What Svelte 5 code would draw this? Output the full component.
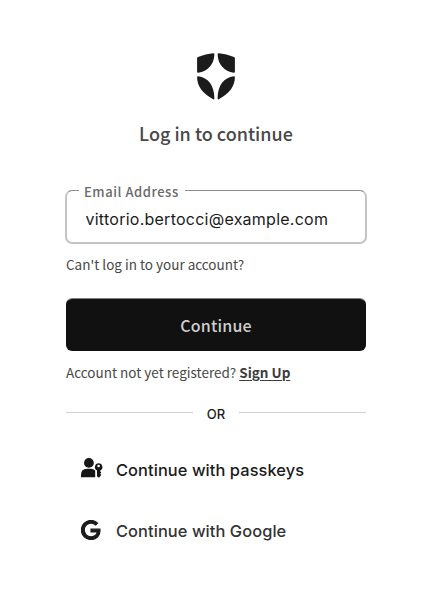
<script>
  let email = $state('vittorio.bertocci@example.com');
</script>

<main>
  <svg class="logo" width="38" height="47" viewBox="0 0 38 47" fill="#1b1b1b" aria-hidden="true">
    <path d="M0.1 5.4Q0.1 4.4 1 4.1Q8.6.9 16 .2Q17.4.1 17.4 1.5C17 11.5 10.8 18.4 1.2 19.8Q.1 19.9.1 18.8Z" />
    <path d="M37.9 5.4Q37.9 4.4 37 4.1Q29.4.9 22 .2Q20.6.1 20.6 1.5C21 11.5 27.2 18.4 36.8 19.8Q37.9 19.9 37.9 18.8Z" />
    <path d="M.1 24.2Q.1 23.1 1.2 23.3C11 24.8 17.2 32 17.4 45.3Q17.4 46.9 16.2 46.2C6 40.7.1 33.4.1 24.2Z" />
    <path d="M37.9 24.2Q37.9 23.1 36.8 23.3C27 24.8 20.8 32 20.6 45.3Q20.6 46.9 21.8 46.2C32 40.7 37.9 33.4 37.9 24.2Z" />
  </svg>
  <h1><span>Log in to continue</span></h1>
  <fieldset>
    <legend><label for="email">Email Address</label></legend>
    <input id="email" type="text" bind:value={email} spellcheck="false" />
  </fieldset>
  <p class="help">Can't log in to your account?</p>
  <button class="primary"><span>Continue</span></button>
  <p class="register">Account not yet registered? <a href="#signup">Sign Up</a></p>
  <div class="divider"><span>OR</span></div>
  <button class="provider passkeys">
    <svg width="22" height="20" viewBox="0 0 22 20" fill="#171717" aria-hidden="true">
      <circle cx="7.9" cy="4.9" r="4.9" />
      <path d="M0 19.3V17.1Q0 10.8 6 10.8H10.2Q12.4 10.8 14.2 12.5V19.3Z" />
      <path fill-rule="evenodd" d="M17.6 5.2A3.8 3.8 0 0 1 19.3 12.4V13.6L20.3 14.6L19.2 15.8L20.3 17L18 19.8L16 18.2V12.4A3.8 3.8 0 0 1 17.6 5.2ZM17.6 6.7A1.3 1.3 0 1 0 17.6 9.3A1.3 1.3 0 1 0 17.6 6.7Z" />
    </svg>
    <span>Continue with passkeys</span>
  </button>
  <button class="provider google">
    <svg width="22" height="20" viewBox="-0.2 -0.6 27.72 25.2" fill="#1c1c1c" stroke="#1c1c1c" stroke-width="1.6" aria-hidden="true">
      <path d="M12.48 10.92v3.28h7.84c-.24 1.84-.853 3.187-1.787 4.133-1.147 1.147-2.933 2.4-6.053 2.4-4.827 0-8.6-3.893-8.6-8.72s3.773-8.72 8.6-8.72c2.6 0 4.507 1.027 5.907 2.347l2.307-2.307C18.747 1.44 16.133 0 12.48 0 5.867 0 .307 5.387.307 12s5.56 12 12.173 12c3.573 0 6.267-1.173 8.373-3.36 2.16-2.16 2.84-5.213 2.84-7.667 0-.76-.053-1.467-.173-2.053H12.48z" />
    </svg>
    <span>Continue with Google</span>
  </button>
</main>

<style>
  :global(body) { background: #fff; }
  main {
    box-sizing: border-box;
    width: 432px;
    height: 606px;
    padding: 53px 66px 0;
    display: flex;
    flex-direction: column;
    font-family: "Noto Sans CJK SC", sans-serif;
    color: #484848;
  }
  .logo { align-self: center; flex: none; display: block; }
  h1 {
    margin: 18px 0 0;
    font-size: 18px;
    line-height: 30px;
    font-weight: 500;
    text-align: center;
    white-space: nowrap;
  }
  fieldset {
    box-sizing: border-box;
    min-width: 0;
    width: 302px;
    height: 62px;
    margin: 34px 0 0 -1px;
    padding: 0 0 0 12px;
    border: 2px solid #c4c4c4;
    border-top: 1px solid #8c8c8c;
    border-radius: 7px;
    flex: none;
  }
  legend {
    padding: 3px 6px 0 5px;
    font-size: 13px;
    line-height: 14px;
    font-weight: 500;
    letter-spacing: 0.55px;
    color: #6a6a6a;
  }
  input {
    display: block;
    width: 270px;
    height: 40px;
    margin: 0 0 0 6.5px;
    padding: 0;
    border: 0;
    outline: 0;
    background: none;
    font: 400 16px "Inter", sans-serif;
    letter-spacing: 0.25px;
    color: #1b1b1b;
  }
  p { margin: 0; font-size: 13.5px; line-height: 20px; white-space: nowrap; }
  .help { margin-top: 10px; }
  button { border: 0; padding: 0; font: inherit; }
  .primary {
    box-sizing: border-box;
    flex: none;
    height: 53px;
    margin-top: 24px;
    border-top: 1px solid #7d807d;
    border-radius: 6px;
    background: #111;
    background-clip: padding-box;
    color: #cfcfcf;
    font-size: 16px;
    font-weight: 500;
    letter-spacing: 0.2px;
  }
  .register { margin-top: 11px; }
  a { color: #3c3c3c; font-weight: 700; text-decoration: underline; text-decoration-thickness: 1px; text-underline-offset: 2px; }
  .divider {
    display: flex;
    align-items: center;
    gap: 14px;
    height: 20px;
    margin-top: 21px;
    font: 500 13px "Inter", sans-serif;
    color: #1b1b1b;
  }
  .divider span { padding-top: 1px; }
  .divider::before, .divider::after { content: ""; flex: 1; height: 1px; margin-bottom: 1px; background: #d0d0d0; }
  .provider {
    display: flex;
    align-items: center;
    height: 24px;
    padding-left: 15px;
    gap: 13px;
    background: none;
    font: 450 16.4px "Inter", sans-serif;
    letter-spacing: 0.08px;
    color: #1b1b1b;
  }
  .passkeys { margin-top: 35px; }
  .passkeys svg { margin-bottom: 4px; }
  .google { margin-top: 37px; color: #333; }
  .google svg { margin-bottom: 2px; }
</style>
